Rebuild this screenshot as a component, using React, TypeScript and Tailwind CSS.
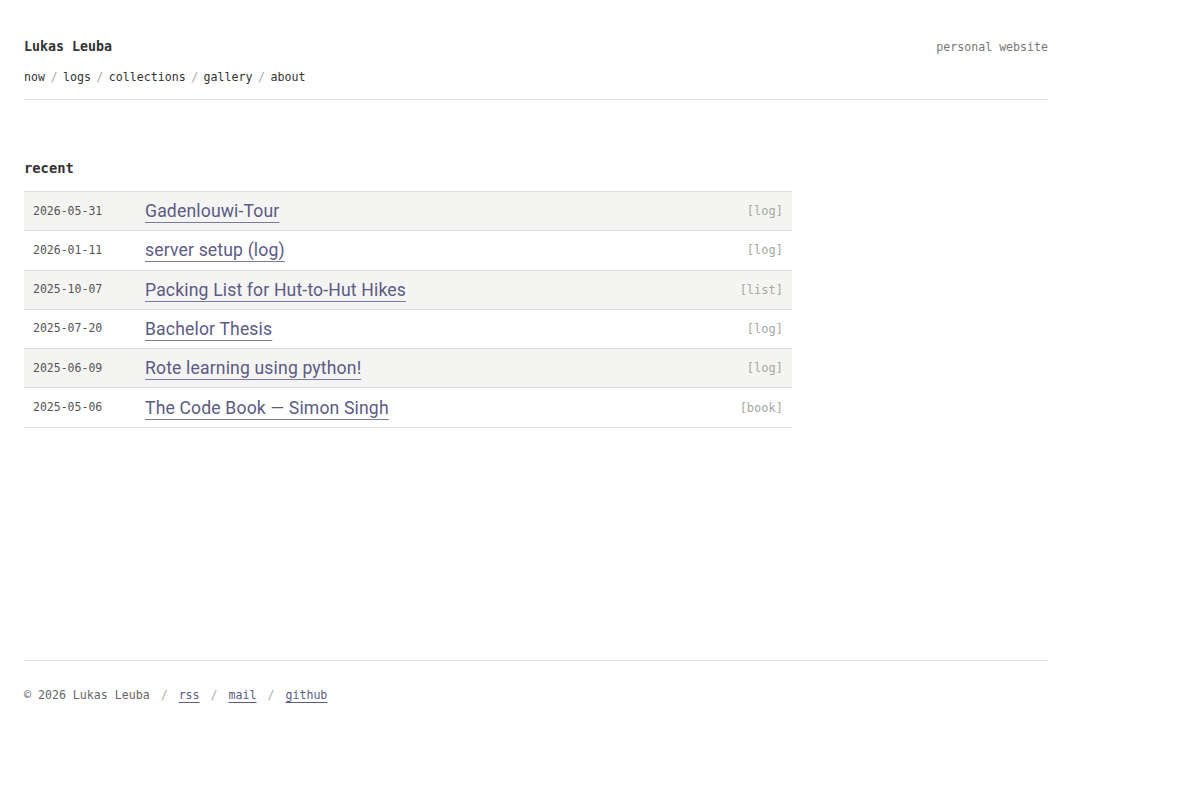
import React from "react";

const mono = { fontFamily: '"DejaVu Sans Mono", "Liberation Mono", monospace' };
const sans = { fontFamily: 'Roboto, "Noto Sans", sans-serif' };

const entries = [
  { date: "2026-05-31", title: "Gadenlouwi-Tour", kind: "log" },
  { date: "2026-01-11", title: "server setup (log)", kind: "log" },
  { date: "2025-10-07", title: "Packing List for Hut-to-Hut Hikes", kind: "list" },
  { date: "2025-07-20", title: "Bachelor Thesis", kind: "log" },
  { date: "2025-06-09", title: "Rote learning using python!", kind: "log" },
  { date: "2025-05-06", title: "The Code Book \u2014 Simon Singh", kind: "book" },
];

const nav = ["now", "logs", "collections", "gallery", "about"];

export default function App() {
  return (
    <div className="min-h-[800px] bg-white text-[#333]" style={mono}>
      <div className="w-[1024px] ml-6 flex flex-col">
        <header className="pt-[37px] border-b border-[#ddd] pb-[12px]">
          <div className="flex items-baseline justify-between">
            <span className="text-[13.3px] font-bold leading-5 text-[#333]">Lukas Leuba</span>
            <span className="text-[11.6px] text-[#777]">personal website</span>
          </div>
          <nav className="mt-[10px] flex items-center text-[11.6px] leading-5 text-[#333]">
            {nav.map((n, i) => (
              <React.Fragment key={n}>
                {i > 0 && <span className="mx-[5.5px] text-[#aaa]">/</span>}
                <a href="#" className="text-[#333]">{n}</a>
              </React.Fragment>
            ))}
          </nav>
        </header>

        <main className="pt-[58px]">
          <h2 className="text-[13.8px] font-bold leading-5 text-[#333] mb-[13px]">recent</h2>
          <div className="w-[768px] border-t border-[#ddd]">
            {entries.map((e, i) => (
              <div
                key={e.date}
                className={`flex items-center h-[39.3px] border-b border-[#ddd] px-[9px] ${i % 2 === 0 ? "bg-[#f4f4f2]" : "bg-white"}`}
              >
                <span className="w-[112px] text-[11.5px] text-[#555]">{e.date}</span>
                <a
                  href="#"
                  className="flex-1 text-[17.6px] tracking-[0.15px] leading-6 text-[#5b5b85] underline underline-offset-[5px] decoration-1 decoration-[#7a7a9c]"
                  style={sans}
                >
                  {e.title}
                </a>
                <span className="text-[12px] text-[#a3aaa3]">[{e.kind}]</span>
              </div>
            ))}
          </div>
        </main>

        <footer className="mt-[232px] border-t border-[#ddd] pt-[26px] flex items-center text-[11.6px] text-[#666]">
          <span>© 2026 Lukas Leuba</span>
          <span className="mx-[11px] text-[#aaa]">/</span>
          <a href="#" className="text-[#5b5b85] underline underline-offset-[3px]">rss</a>
          <span className="mx-[11px] text-[#aaa]">/</span>
          <a href="#" className="text-[#5b5b85] underline underline-offset-[3px]">mail</a>
          <span className="mx-[11px] text-[#aaa]">/</span>
          <a href="#" className="text-[#5b5b85] underline underline-offset-[3px]">github</a>
        </footer>
      </div>
    </div>
  );
}
